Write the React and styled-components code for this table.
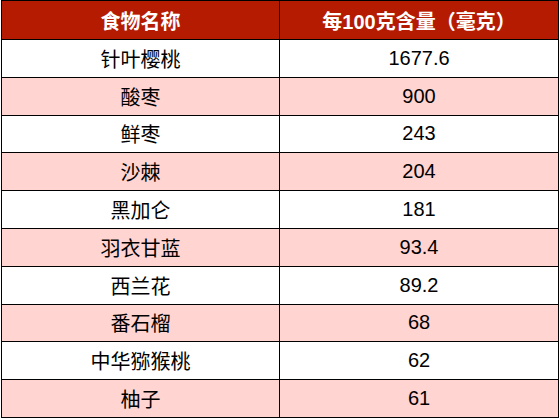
import styled, { createGlobalStyle } from "styled-components";

const rows = [
    ["针叶樱桃", "1677.6"],
    ["酸枣", "900"],
    ["鲜枣", "243"],
    ["沙棘", "204"],
    ["黑加仑", "181"],
    ["羽衣甘蓝", "93.4"],
    ["西兰花", "89.2"],
    ["番石榴", "68"],
    ["中华猕猴桃", "62"],
    ["柚子", "61"],
];

export default function App() {
    return (
        <>
            <GlobalStyle />
            <Table>
                <Header>
                    <HeadCell $first>食物名称</HeadCell>
                    <HeadCell>每100克含量（毫克）</HeadCell>
                </Header>
                {rows.map(([name, value], i) => (
                    <Row key={name} $alt={i % 2 === 1}>
                        <Cell $first>{name}</Cell>
                        <Cell>{value}</Cell>
                    </Row>
                ))}
            </Table>
        </>
    );
}

const GlobalStyle = createGlobalStyle`
    html, body {
        margin: 0;
        padding: 0;
        background: #FFFFFF;
    }
    body {
        font-family: "Liberation Sans", "Noto Sans CJK SC", sans-serif;
    }
`;

const Table = styled.div`
    width: 558px;
    margin-left: 1px;
    box-sizing: border-box;
    border: 1px solid #000000;
    border-bottom: none;
`;

const Header = styled.div`
    display: grid;
    grid-template-columns: 278px 278px;
    height: 39px;
    box-sizing: border-box;
    border-bottom: 1px solid #000000;
    background-color: #B51B00;
`;

const HeadCell = styled.div`
    display: flex;
    align-items: center;
    justify-content: center;
    box-sizing: border-box;
    border-right: ${(p) => (p.$first ? "1px solid #000000" : "none")};
    font-family: "Liberation Sans", "Noto Sans CJK SC", sans-serif;
    font-weight: 700;
    font-size: 20px;
    color: #FFFFFF;
`;

const Row = styled.div`
    display: grid;
    grid-template-columns: 278px 278px;
    height: 37.8px;
    box-sizing: border-box;
    border-bottom: 1px solid #000000;
    background-color: ${(p) => (p.$alt ? "#FFD4D1" : "#FFFFFF")};
`;

const Cell = styled.div`
    display: flex;
    align-items: center;
    justify-content: center;
    box-sizing: border-box;
    border-right: ${(p) => (p.$first ? "1px solid #000000" : "none")};
    font-family: "Liberation Sans", "Noto Sans CJK SC", sans-serif;
    font-size: 20px;
    color: #000000;
`;
